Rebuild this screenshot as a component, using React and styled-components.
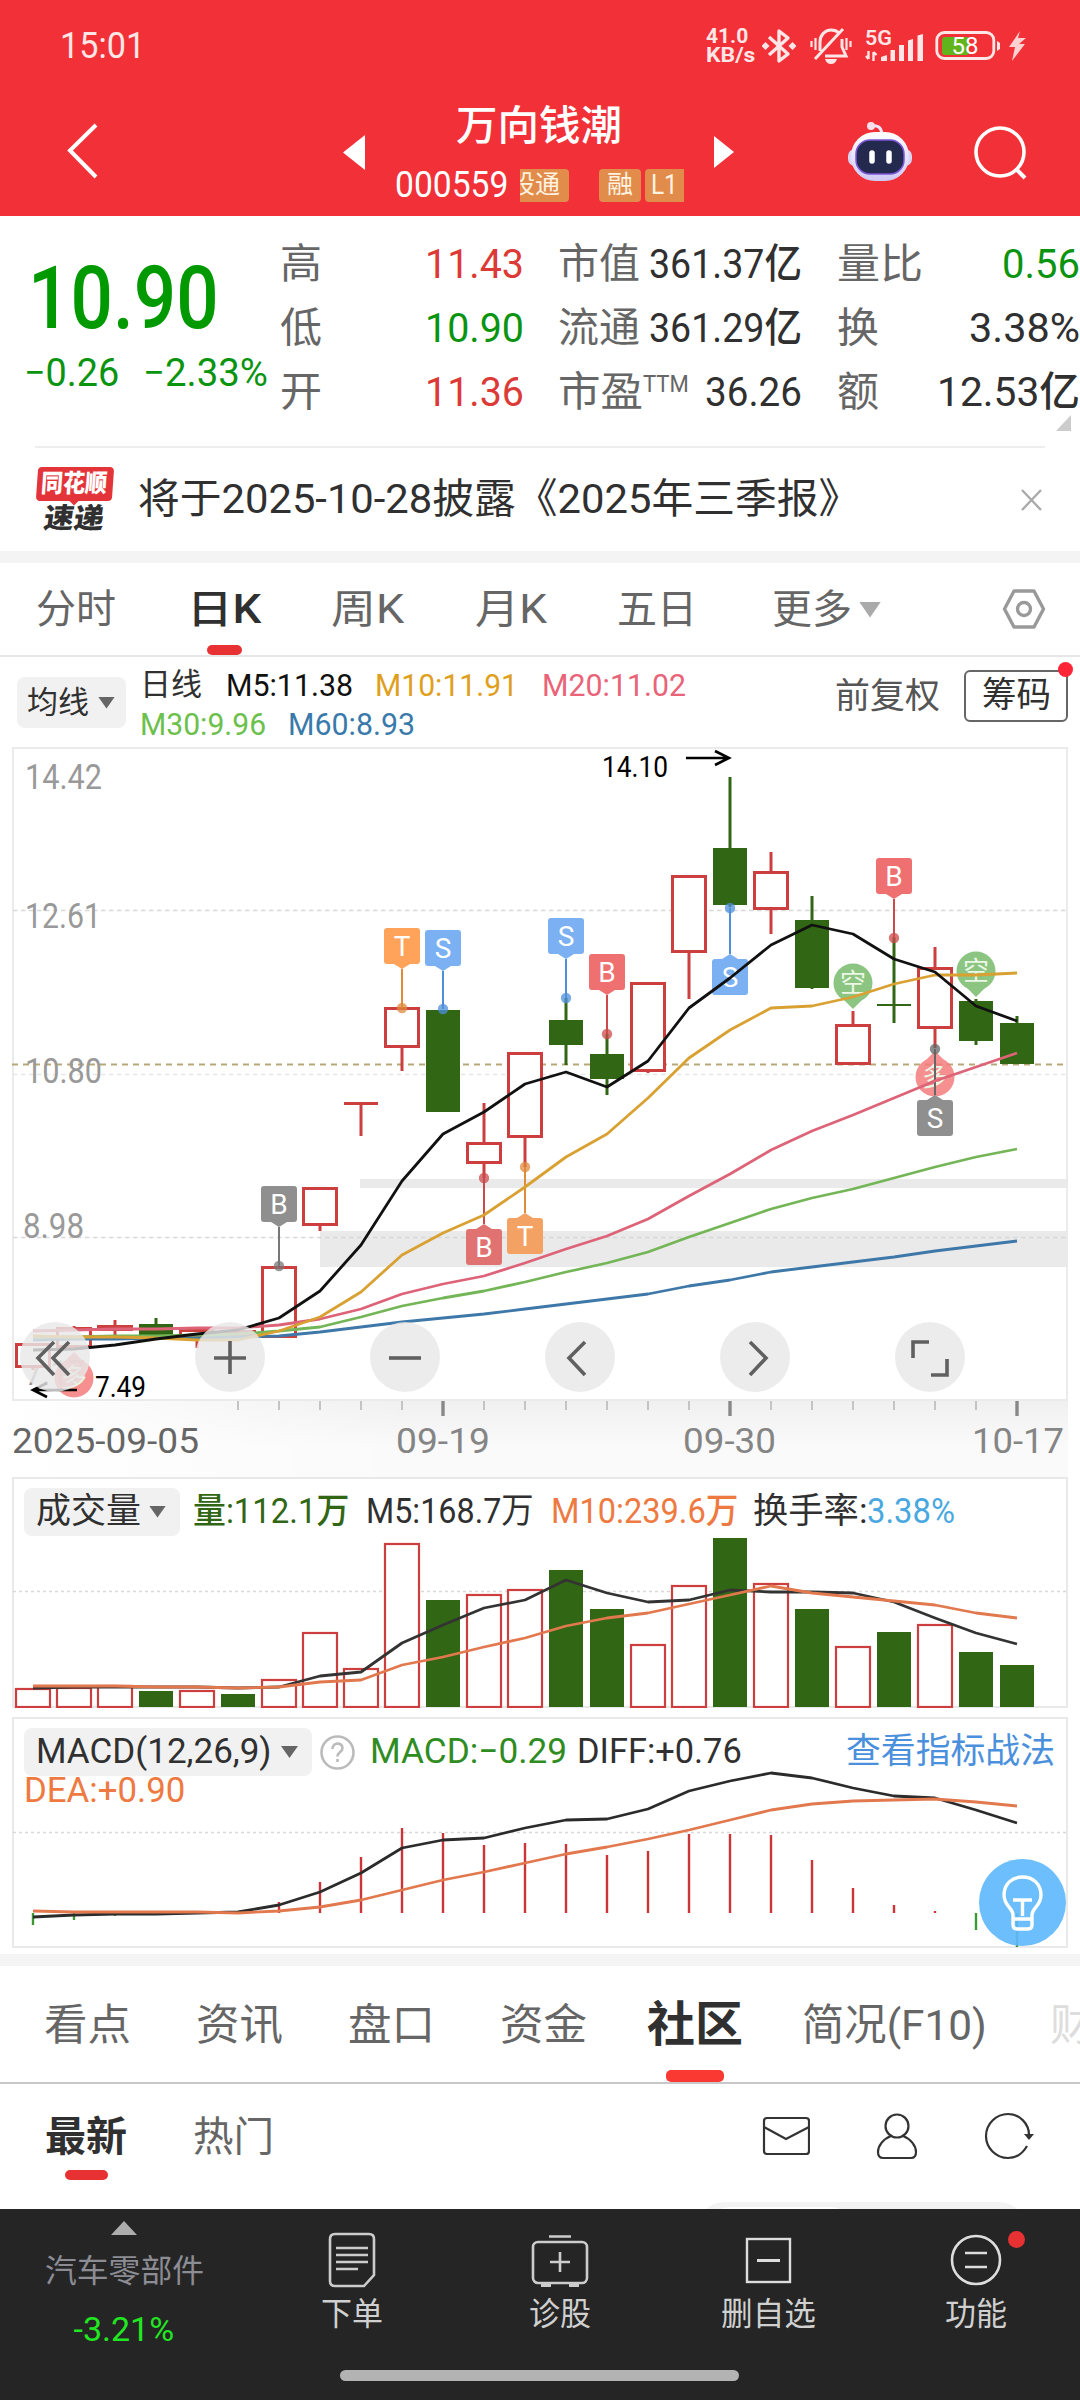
import React, { useLayoutEffect, useRef, useState } from 'react';
import styled, { createGlobalStyle } from 'styled-components';

const GlobalStyle = createGlobalStyle`
  * {
    box-sizing: border-box;
  }
  body {
    margin: 0;
    background: #fff;
    font-family: Roboto, 'Noto Sans CJK SC', sans-serif;
  }
  svg {
    display: block;
  }
`

const red = '#dc3a36'
const green = '#0a9410'
const candleRed = '#cc3f3e'
const candleGreen = '#316714'

/* Text squeezed or stretched to a given width, the digits are condensed */

const FitBox = styled.span`
  display: block;
  flex: none;
  width: ${p => p.$w}px;
  margin-left: ${p => p.$ml || 0}px;
  font-size: ${p => p.$size}px;
  line-height: ${p => p.$lh || Math.round(p.$size * 1.2)}px;
  font-weight: ${p => p.$weight || 400};
  color: ${p => p.$color || 'inherit'};
  white-space: nowrap;
  overflow: visible;
`

const FitInner = styled.span`
  display: inline-block;
  transform-origin: 0 50%;
  vertical-align: top;
`

const Fit = ({ w, size, lh, ml, color, weight, children }) => {
  const ref = useRef(null)
  const [scale, setScale] = useState(1)
  useLayoutEffect(() => {
    setScale(w / ref.current.offsetWidth)
  }, [w, children])
  return (
    <FitBox $w={w} $size={size} $lh={lh} $ml={ml} $color={color} $weight={weight}>
      <FitInner ref={ref} style={{ transform: `scaleX(${scale})` }}>{children}</FitInner>
    </FitBox>
  )
}

const Space = styled.i`
  flex: none;
  width: ${p => p.$w || 1}px;
  height: ${p => p.$h || 1}px;
`

const Page = styled.div`
  width: 1080px;
  height: 2400px;
  overflow: hidden;
  display: flex;
  flex-direction: column;
  background: #fff;
`

const Band = styled.div`
  flex: none;
  height: 12px;
  background: #f4f4f4;
`

/* ---------- header ---------- */

const Header = styled.header`
  flex: none;
  height: 216px;
  background: #f23038;
  color: #fff;
`

const StatusBar = styled.div`
  height: 92px;
  padding: 0 53px 0 60px;
  display: flex;
  align-items: center;
  justify-content: space-between;
  color: #ffe6e6;
`

const StatusIcons = styled.div`
  display: flex;
  align-items: center;
`

const Speed = styled.div`
  width: 49px;
  margin-right: 7px;
`

const Nav = styled.div`
  height: 124px;
  display: flex;
`

const Back = styled.div`
  width: 343px;
  padding: 30px 0 0 66px;
`

const Arrow = styled.div`
  margin-top: 43px;
  width: 22px;
`

const Title = styled.div`
  width: 349px;
  padding: 12px 0 0 30px;
`

const TitleName = styled.div`
  display: flex;
  padding-left: 61px;
`

const CodeRow = styled.div`
  display: flex;
  margin-top: 16px;
  align-items: center;
  height: 40px;
`

const Tag = styled.span`
  display: flex;
  align-items: center;
  justify-content: ${p => p.$end ? 'flex-end' : 'center'};
  width: ${p => p.$w}px;
  height: 33px;
  margin-left: ${p => p.$ml}px;
  padding-right: ${p => p.$end ? 9 : 0}px;
  border-radius: ${p => p.$radius};
  background: #e28c4c;
  color: #fff3e0;
  overflow: hidden;
`

const Robot = styled.div`
  margin: 29px 0 0 111px;
`

const Search = styled.div`
  margin: 32px 0 0 59px;
`

/* ---------- quote ---------- */

const Quote = styled.section`
  flex: none;
  height: 230px;
  display: flex;
  padding-top: 16px;
`

const PriceCol = styled.div`
  width: 280px;
  padding-top: 12px;
`

const Changes = styled.div`
  display: flex;
  padding-left: 24px;
  margin-top: 1px;
`

const StatCol = styled.div`
  width: ${p => p.$w}px;
  margin-left: ${p => p.$ml || 0}px;
`

const StatRow = styled.div`
  height: 64px;
  display: flex;
  align-items: center;
  justify-content: space-between;
  color: #303030;
`

const StatLabel = styled.div`
  display: flex;
  color: #666;
`

const Corner = styled.div`
  width: 15px;
  height: 16px;
  margin: -9px 0 0 219px;
  background: #ccc;
  clip-path: polygon(100% 0, 100% 100%, 0 100%);
`

const News = styled.section`
  flex: none;
  height: 105px;
  margin: 0 35px;
  border-top: 2px solid #eee;
  display: flex;
  align-items: center;
  color: #303030;
`

const Logo = styled.div`
  width: 78px;
  height: 68px;
  margin-top: 2px;
`

const LogoBubble = styled.div`
  width: 76px;
  height: 34px;
  margin-left: 2px;
  padding: 0 0 0 4px;
  border-radius: 4px;
  background: #e3343a;
  color: #fff;
  transform: skewX(-4deg);
`

const LogoPointer = styled.div`
  width: 10px;
  height: 5px;
  margin-left: 34px;
  background: #e3343a;
  clip-path: polygon(0 0, 100% 0, 50% 100%);
`

const LogoWord = styled.div`
  padding-left: 9px;
  margin-top: -3px;
  transform: skewX(-8deg);
`

const CloseBox = styled.div`
  margin-left: 160px;
`

/* ---------- chart tabs ---------- */

const Periods = styled.nav`
  flex: none;
  height: 94px;
  display: flex;
  border-bottom: 2px solid #e6e6e6;
  color: #666;
`

const Period = styled.div`
  margin-left: ${p => p.$ml}px;
  padding-top: 23px;
  display: flex;
  flex-direction: column;
  align-items: center;
  justify-content: space-between;
`

const Underline = styled.i`
  display: block;
  width: ${p => p.$w}px;
  height: ${p => p.$h || 10}px;
  border-radius: 5px;
  background: ${p => p.$color || '#e83132'};
`

const Caret = styled.i`
  display: block;
  width: ${p => p.$w || 17}px;
  height: ${p => p.$h || 12}px;
  margin-left: ${p => p.$ml || 0}px;
  background: ${p => p.$color || '#666'};
  clip-path: polygon(0 0, 100% 0, 50% 100%);
`

const PeriodMore = styled.div`
  display: flex;
  align-items: center;
  height: 93px;
  margin-left: 75px;
`

const Gear = styled.div`
  margin: 25px 0 0 121px;
`

const MaRow = styled.div`
  flex: none;
  height: 90px;
  display: flex;
`

const Picker = styled.div`
  display: flex;
  align-items: center;
  flex: none;
  width: ${p => p.$w}px;
  height: ${p => p.$h || 48}px;
  padding-left: ${p => p.$pad || 12}px;
  border-radius: 8px;
  background: #f1f1f1;
  color: #303030;
`

const MaPicker = styled.div`
  padding: 20px 0 0 17px;
`

const MaValues = styled.div`
  width: 709px;
  padding: 8px 0 0 14px;
`

const Line = styled.div`
  display: flex;
  height: ${p => p.$h || 39}px;
  align-items: center;
`

const Adjust = styled.div`
  padding-top: 19px;
`

const Chips = styled.div`
  position: relative;
  width: 104px;
  height: 52px;
  margin: 13px 0 0 24px;
  border: 2px solid #666;
  border-radius: 6px;
  padding: 3px 0 0 16px;
  color: #303030;
`

const RedDot = styled.i`
  position: absolute;
  top: ${p => p.$top}px;
  right: ${p => p.$right}px;
  width: ${p => p.$size}px;
  height: ${p => p.$size}px;
  border-radius: 50%;
  background: ${p => p.$color || '#ff2436'};
`

/* ---------- charts ---------- */

const KBox = styled.div`
  flex: none;
  position: relative;
  width: 1056px;
  height: 654px;
  margin-left: 12px;
`

const Controls = styled.div`
  position: absolute;
  left: 8px;
  bottom: 9px;
  display: flex;
  gap: 105px;
`

const RoundButton = styled.div`
  width: 70px;
  height: 70px;
  border-radius: 50%;
  background: rgba(232, 232, 232, 0.82);
`

const DateAxis = styled.div`
  flex: none;
  width: 1056px;
  height: 76px;
  margin-left: 12px;
  background: linear-gradient(90deg, #fff 0, rgba(255, 255, 255, 0) 400px),
    linear-gradient(180deg, #f0f0f0, #fafafa 60%);
`

const VolumeBox = styled.div`
  flex: none;
  position: relative;
  width: 1056px;
  height: 231px;
  margin-left: 12px;
`

const MacdBox = styled.div`
  flex: none;
  position: relative;
  width: 1056px;
  height: 231px;
  margin: 9px 0 6px 12px;
`

const Legend = styled.div`
  position: absolute;
  top: 11px;
  left: 12px;
  right: 0;
`

const Bulb = styled.div`
  position: absolute;
  top: 142px;
  left: 967px;
  width: 87px;
  height: 87px;
  border-radius: 50%;
  background: rgba(95, 185, 252, 0.92);
`

/* ---------- community ---------- */

const Sections = styled.nav`
  flex: none;
  height: 118px;
  display: flex;
  border-bottom: 2px solid #c8c8c8;
  color: #666;
  overflow: hidden;
`

const SectionTab = styled.div`
  flex: none;
  margin-left: ${p => p.$ml}px;
  padding-top: ${p => p.$active ? 30 : 33}px;
  display: flex;
  flex-direction: column;
  align-items: center;
  justify-content: space-between;
  color: ${p => p.$faded ? '#ddd' : 'inherit'};
`

const SubRow = styled.div`
  flex: none;
  height: 97px;
  padding-left: 45px;
  display: flex;
  color: #666;
`

const SubTab = styled.div`
  margin-left: ${p => p.$ml || 0}px;
  padding-top: 26px;
  display: flex;
  flex-direction: column;
  align-items: center;
`

const SubIcons = styled.div`
  display: flex;
  padding: 28px 0 0 488px;
  gap: 66px;
`

const Switch = styled.div`
  flex: none;
  width: 333px;
  height: 60px;
  margin: 21px 0 -53px 695px;
  padding: 5px 10px;
  border-radius: 30px;
  background: #f3f3f3;
`

const SwitchThumb = styled.div`
  width: 150px;
  height: 50px;
  border-radius: 25px;
  background: #fff;
`

const BottomBar = styled.footer`
  flex: none;
  position: relative;
  height: 191px;
  background: #252525;
  color: #d0d0d0;
  display: flex;
`

const Sector = styled.div`
  width: 248px;
  display: flex;
  flex-direction: column;
  align-items: center;
`

const SectorArrow = styled.i`
  width: 26px;
  height: 14px;
  margin-top: 12px;
  background: #adadad;
  clip-path: polygon(50% 0, 100% 100%, 0 100%);
`

const Action = styled.div`
  position: relative;
  width: 208px;
  display: flex;
  flex-direction: column;
  align-items: center;
  padding-top: 23px;
  gap: 7px;
`

const HomeIndicator = styled.div`
  position: absolute;
  left: 340px;
  bottom: 19px;
  width: 399px;
  height: 11px;
  border-radius: 6px;
  background: #b3b3b3;
`

/* ---------- data ---------- */

const colX = i => 33 + i * 41

// [up, bodyTop, bodyBottom, high, low]
const candles = [
  [1, 1343, 1368, 1343, 1370], [1, 1327, 1348, 1326, 1348], [1, 1325, 1331, 1320, 1337],
  [0, 1324, 1335, 1318, 1336], [1, 1329, 1338, 1329, 1348], [1, 1330, 1337, 1327, 1337],
  [1, 1266, 1338, 1266, 1338], [1, 1187, 1226, 1187, 1231], [1, 1102, 1105, 1102, 1136],
  [1, 1007, 1048, 1007, 1071], [0, 1010, 1112, 1010, 1112], [1, 1142, 1164, 1103, 1178],
  [1, 1052, 1138, 1052, 1167], [0, 1020, 1045, 998, 1065], [0, 1054, 1079, 1034, 1095],
  [1, 982, 1072, 982, 1073], [1, 875, 953, 875, 999], [0, 848, 905, 777, 907],
  [1, 871, 910, 852, 934], [0, 920, 988, 896, 989], [1, 1024, 1065, 1011, 1065],
  [0, 1004, 1006, 937, 1023], [1, 967, 1029, 947, 1048], [0, 1001, 1041, 999, 1045],
  [0, 1023, 1064, 1016, 1064],
]

const ma = [
  ['#3e78a8', [1340, 1339, 1339, 1338, 1338, 1337, 1336, 1332, 1327, 1322, 1318, 1314, 1309, 1304, 1299, 1294, 1286, 1280, 1272, 1267, 1262, 1257, 1251, 1246, 1241]],
  ['#74b657', [1337, 1337, 1336, 1336, 1335, 1334, 1331, 1327, 1317, 1306, 1298, 1291, 1282, 1272, 1263, 1252, 1237, 1223, 1209, 1198, 1189, 1178, 1167, 1157, 1149]],
  ['#dd6478', [1331, 1330, 1329, 1329, 1328, 1328, 1325, 1319, 1309, 1294, 1284, 1276, 1263, 1249, 1236, 1219, 1196, 1174, 1150, 1131, 1115, 1098, 1081, 1067, 1053]],
  ['#d9a032', [1336, 1337, 1337, 1338, 1340, 1340, 1331, 1317, 1292, 1255, 1233, 1215, 1187, 1157, 1134, 1098, 1058, 1030, 1008, 1006, 997, 984, 975, 975, 973]],
  ['#111', [1350, 1349, 1345, 1339, 1334, 1330, 1318, 1291, 1245, 1181, 1134, 1112, 1084, 1072, 1087, 1061, 1008, 978, 945, 925, 934, 959, 972, 1006, 1021]],
]

// [column, badge top, dot y, letter, fill, line]
const badges = [
  [6, 1186, 1266, 'B', '#8f8f8f', '#777'],
  [9, 928, 1008, 'T', '#ffa35a', '#e08a3c'],
  [10, 930, 1009, 'S', '#7bb0f2', '#4e8fdc'],
  [11, 1229, 1178, 'B', '#e07272', '#c94c4c'],
  [12, 1218, 1167, 'T', '#f4a263', '#e08a3c'],
  [13, 918, 998, 'S', '#7bb0f2', '#4e8fdc'],
  [14, 954, 1034, 'B', '#ee7070', '#cc4a4a'],
  [17, 959, 908, 'S', '#7bb0f2', '#4e8fdc'],
  [21, 858, 938, 'B', '#ee7070', '#cc4a4a'],
  [22, 1100, 1049, 'S', '#8f8f8f', '#666'],
]

// [up, top]
const volumes = [
  [1, 1688], [1, 1687], [1, 1685], [0, 1691], [1, 1690], [0, 1694], [1, 1679], [1, 1632], [1, 1668],
  [1, 1543], [0, 1600], [1, 1594], [1, 1589], [0, 1570], [0, 1609], [1, 1644], [1, 1585], [0, 1538],
  [1, 1583], [0, 1609], [1, 1646], [0, 1632], [1, 1624], [0, 1652], [0, 1665],
]
const volMa5 = [1688, 1687, 1687, 1687, 1687, 1688, 1687, 1676, 1672, 1643, 1625, 1608, 1600, 1580, 1593, 1602, 1600, 1590, 1592, 1592, 1593, 1602, 1618, 1633, 1644]
const volMa10 = [1686, 1686, 1686, 1687, 1687, 1688, 1687, 1682, 1680, 1665, 1657, 1647, 1638, 1626, 1618, 1613, 1604, 1595, 1586, 1593, 1597, 1601, 1605, 1613, 1618]

const macd = [1925, 1920, 1916, 1915, 1913, 1912, 1902, 1882, 1857, 1828, 1833, 1845, 1843, 1844, 1855, 1851, 1834, 1834, 1835, 1860, 1888, 1905, 1911, 1930, 1947]
const diff = [1917, 1915, 1914, 1914, 1913, 1912, 1905, 1892, 1873, 1848, 1840, 1838, 1828, 1820, 1819, 1809, 1791, 1781, 1773, 1778, 1788, 1796, 1798, 1810, 1823]
const dea = [1911, 1912, 1912, 1912, 1912, 1913, 1911, 1907, 1900, 1890, 1880, 1872, 1863, 1854, 1847, 1839, 1830, 1820, 1810, 1804, 1801, 1800, 1799, 1802, 1806]

const points = ys => ys.map((y, i) => `${colX(i)},${y}`).join(' ')

const Trend = ({ ys, color }) => (
  <polyline points={points(ys)} fill="none" stroke={color} strokeWidth="2.8" strokeLinejoin="round" />
)

const Candle = ({ i, data: [up, top, bottom, high, low] }) => {
  const x = colX(i)
  const color = up ? candleRed : candleGreen
  return (
    <g>
      {high < top && <path d={`M${x} ${high}V${top}`} stroke={color} strokeWidth="3" />}
      {low > bottom && <path d={`M${x} ${bottom}V${low}`} stroke={color} strokeWidth="3" />}
      {up && bottom - top > 4
        ? <rect x={x - 16.5} y={top + 1.5} width="33" height={bottom - top - 3} fill="#fff" stroke={color} strokeWidth="3" />
        : <rect x={x - 17} y={top} width="34" height={bottom - top} fill={color} />}
    </g>
  )
}

const Badge = ({ data: [i, top, dot, letter, fill, line] }) => {
  const x = colX(i)
  const below = dot < top
  const tip = below ? top - 5 : top + 41
  const base = below ? top : top + 36
  return (
    <g>
      <circle cx={x} cy={dot} r="5.2" fill={line} opacity="0.75" />
      <path d={`M${x} ${dot}V${tip}`} stroke={line} strokeWidth="2" />
      <path d={`M${x - 8} ${base}L${x} ${tip}L${x + 8} ${base}Z`} fill={fill} />
      <rect x={x - 18} y={top} width="36" height="36" rx="3" fill={fill} />
      <text x={x} y={top + 28} fontSize="28" textAnchor="middle" fill="#fff">{letter}</text>
    </g>
  )
}

const Balloon = ({ i, y, up, fill, children }) => {
  const x = colX(i)
  const s = up ? -1 : 1
  return (
    <g opacity="0.85">
      <circle cx={x} cy={y} r="19.5" fill={fill} />
      <path d={`M${x - 11} ${y + s * 15}L${x} ${y + s * 26}L${x + 11} ${y + s * 15}Z`} fill={fill} />
      <text x={x} y={y + 9} fontSize="26" textAnchor="middle" fill="#e8f5e0">{children}</text>
    </g>
  )
}

const AxisText = ({ x, y, w, size = 35, color = '#999', weight = 450, children }) => (
  <text x={x} y={y} fontSize={size} fontWeight={weight} fill={color} textLength={w} lengthAdjust="spacingAndGlyphs">{children}</text>
)

const KChart = () => (
  <svg width="1056" height="654" viewBox="12 747 1056 654">
    <rect x="13" y="748" width="1054" height="652" fill="none" stroke="#ebebeb" strokeWidth="2" />
    <rect x="360" y="1179" width="708" height="9" fill="#eaeaea" />
    <rect x="320" y="1231" width="748" height="36" fill="#eaeaea" />
    <path d="M13 910.5H1067M13 1237.5H1067" stroke="#d8d8d8" strokeWidth="1.3" strokeDasharray="4.5 3.5" />
    <path d="M13 1074.5H1067" stroke="#e6e6e6" strokeWidth="1.6" strokeDasharray="4.5 3.5" />
    <path d="M12 1064.5H1067" stroke="#b8a878" strokeWidth="1.8" strokeDasharray="6 5" />
    <AxisText x={25} y={789} w={77}>14.42</AxisText>
    <AxisText x={25} y={928} w={76}>12.61</AxisText>
    <AxisText x={25} y={1083} w={77}>10.80</AxisText>
    <AxisText x={23} y={1238} w={61}>8.98</AxisText>
    <AxisText x={25} y={1385} w={60}>7.17</AxisText>
    {candles.map((c, i) => <Candle key={i} i={i} data={c} />)}
    <Balloon i={20} y={983} fill="#78bc6c">空</Balloon>
    <Balloon i={23} y={971} fill="#78bc6c">空</Balloon>
    <Balloon i={22} y={1077} up fill="#f57c7c">多</Balloon>
    <Balloon i={1} y={1378} up fill="#f57c7c">多</Balloon>
    {badges.map((b, i) => <Badge key={i} data={b} />)}
    {ma.map(([color, ys]) => <Trend key={color} ys={ys} color={color} />)}
    <AxisText x={602} y={777} w={66} size={30} color="#000" weight={400}>14.10</AxisText>
    <path d="M686 758H729M715 751L729 758L715 765" fill="none" stroke="#000" strokeWidth="2.6" />
    <AxisText x={95} y={1397} w={51} size={30} color="#000" weight={400}>7.49</AxisText>
    <path d="M77 1390H33M47 1383L33 1390L47 1397" fill="none" stroke="#000" strokeWidth="2.6" />
  </svg>
)

const controlPaths = [
  'M34 20L18 36L34 53M49 20L33 36L49 53',
  'M35 19V52M19 36H51',
  'M19 36H51',
  'M40 20L24 36L40 53',
  'M30 20L46 36L30 53',
  'M18 36V20H34M52 37V53H36',
]

const major = [10, 17, 24]

const DateTicks = () => (
  <svg width="1056" height="76" viewBox="12 1401 1056 76">
    {candles.map((_, i) => i > 4 && (
      major.includes(i)
        ? <path key={i} d={`M${colX(i)} 1401V1416`} stroke="#888" strokeWidth="3.4" />
        : <path key={i} d={`M${colX(i)} 1401V1410`} stroke="#c4c4c4" strokeWidth="2" />
    ))}
    <AxisText x={12} y={1453} w={187} color="#666">2025-09-05</AxisText>
    <AxisText x={396} y={1453} w={94} color="#858585">09-19</AxisText>
    <AxisText x={683} y={1453} w={93} color="#858585">09-30</AxisText>
    <AxisText x={972} y={1453} w={92} color="#858585">10-17</AxisText>
  </svg>
)

const VolumeChart = () => (
  <svg width="1056" height="231" viewBox="12 1477 1056 231">
    <rect x="13" y="1478" width="1054" height="229" fill="none" stroke="#e9e9e9" strokeWidth="2" />
    <path d="M13 1591.5H1067" stroke="#d8d8d8" strokeWidth="1.3" strokeDasharray="3 3" />
    {volumes.map(([up, top], i) => up
      ? <rect key={i} x={colX(i) - 17} y={top + 1} width="34" height={1706 - top} fill="#fff" stroke={candleRed} strokeWidth="2.2" />
      : <rect key={i} x={colX(i) - 17} y={top} width="34" height={1707 - top} fill={candleGreen} />)}
    <Trend ys={volMa5} color="#333" />
    <Trend ys={volMa10} color="#e2794e" />
  </svg>
)

const MacdChart = () => (
  <svg width="1056" height="231" viewBox="12 1717 1056 231">
    <rect x="13" y="1718" width="1054" height="229" fill="none" stroke="#e9e9e9" strokeWidth="2" />
    <path d="M13 1832.5H1067" stroke="#d8d8d8" strokeWidth="1.3" strokeDasharray="3 3" />
    {macd.map((y, i) => (
      <path key={i} d={`M${colX(i)} 1913V${y}`} stroke={y > 1913 ? '#3c9a34' : '#cc3538'} strokeWidth="2.4" />
    ))}
    <Trend ys={diff} color="#2b2b2b" />
    <Trend ys={dea} color="#e2794e" />
  </svg>
)

/* ---------- icons ---------- */

const BluetoothIcon = () => (
  <svg width="34" height="38" viewBox="0 0 34 38" fill="none" stroke="#ffe6e6" strokeWidth="3.4">
    <path d="M7 10L26 27L17 34V4L26 11L7 28" strokeLinejoin="round" />
    <path d="M3.5 15L7.5 19L3.5 23L-.5 19ZM30.5 15L34.5 19L30.5 23L26.5 19Z" fill="#ffe6e6" stroke="none" />
  </svg>
)

const MuteIcon = () => (
  <svg width="42" height="38" viewBox="0 0 42 38" fill="none" stroke="#ffe6e6" strokeWidth="3">
    <path d="M10 24V15C10 8 15 3 21 3C24 3 27 4 29 6M32 12V20L36 29H15M5 32L33 2" />
    <path d="M15 32H27C26 35.5 24 37 21 37S16 35.5 15 32Z" fill="#ffe6e6" stroke="none" />
    <path d="M1.5 14V20M5.5 11V23M40.5 14V20M36.5 11V23" strokeWidth="2.2" />
  </svg>
)

const SignalIcon = () => (
  <svg width="60" height="34" viewBox="0 0 60 34" fill="#ffe6e6">
    <text x="0" y="16" fontSize="20" fontWeight="600" textLength="27" lengthAdjust="spacingAndGlyphs">5G</text>
    <path d="M3.5 22V30M1 27L3.5 30M8.5 32V23M11.5 26L8.5 23" stroke="#ffe6e6" strokeWidth="2.4" fill="none" />
    <path d="M16 32V28L22 26V32ZM25.5 21H30V32H25.5ZM34 16H39V32H34ZM43 11.5L48 10V32H43ZM52.5 6.5L58 5V32H52.5Z" />
  </svg>
)

const BatteryIcon = () => (
  <svg width="67" height="30" viewBox="0 0 67 30">
    <rect x="7" y="6" width="27" height="18" rx="3" fill="#62b41c" />
    <rect x="1.8" y="1.5" width="57" height="26" rx="7.5" fill="none" stroke="#ffe6e6" strokeWidth="2.8" />
    <path d="M62 10V20L65 18V12Z" fill="#ffe6e6" />
    <text x="16.500" y="23" fontSize="23" fill="#fff" textLength="27" lengthAdjust="spacingAndGlyphs">58</text>
  </svg>
)

const BoltIcon = () => (
  <svg width="19" height="30" viewBox="0 0 19 30">
    <path d="M12 0L1 16H7L4 30L17 13H11L18 7H10Z" fill="#ffd0d2" />
  </svg>
)

const RobotIcon = () => (
  <svg width="66" height="62" viewBox="0 0 66 62">
    <defs>
      <linearGradient id="shell" x1="0" y1="0" x2="0" y2="1">
        <stop offset="0" stopColor="#fff" />
        <stop offset="1" stopColor="#cfc9f4" />
      </linearGradient>
    </defs>
    <path d="M24 5C31 4 34 6 35 13" stroke="#eee6fa" strokeWidth="3" fill="none" />
    <circle cx="24" cy="5" r="4" fill="#fbdfea" />
    <rect x="1" y="28" width="64" height="17" rx="7" fill="#d9d4f5" />
    <rect x="4" y="11" width="58" height="49" rx="24" fill="url(#shell)" />
    <rect x="9" y="19" width="48" height="34" rx="14" fill="#232a4e" stroke="#7b55d8" strokeWidth="1.5" />
    <path d="M25 32V40M42 32V40" stroke="#fff" strokeWidth="5.5" strokeLinecap="round" />
  </svg>
)

const DocIcon = () => (
  <svg width="48" height="56" viewBox="0 0 48 56" fill="none" stroke="#ccc" strokeWidth="2.6">
    <path d="M7 2H41Q46 2 46 7V43L36 54H7Q2 54 2 49V7Q2 2 7 2Z" />
    <path d="M8 16H40M8 23H40M8 30H40M8 37H30" />
  </svg>
)

const CaseIcon = () => (
  <svg width="58" height="56" viewBox="0 0 58 56" fill="none" stroke="#ccc" strokeWidth="2.6">
    <rect x="2" y="10" width="54" height="41" rx="5" />
    <path d="M18 4.5H40M29 20V40M19 30H39" />
    <path d="M10 53H20M38 53H48" strokeWidth="4" />
  </svg>
)

const RemoveIcon = () => (
  <svg width="48" height="56" viewBox="0 0 48 56" fill="none" stroke="#ddd" strokeWidth="2.4">
    <rect x="3" y="7" width="43" height="43" />
    <path d="M13 28.5H36" strokeWidth="3" />
  </svg>
)

const MenuIcon = () => (
  <svg width="52" height="56" viewBox="0 0 52 56" fill="none" stroke="#ddd" strokeWidth="2.6">
    <circle cx="26" cy="28" r="24" />
    <path d="M15 21H37M15 35H37" />
  </svg>
)

const actions = [
  ['下单', 62, DocIcon],
  ['诊股', 62, CaseIcon],
  ['删自选', 95, RemoveIcon],
  ['功能', 62, MenuIcon],
]

const App = () => {
  return (<Page>
    <GlobalStyle />
    <Header>
      <StatusBar>
        <Fit w={85} size={37} weight={450}>15:01</Fit>
        <StatusIcons>
          <Speed>
            <Fit w={42} size={21} lh={19} weight={700}>41.0</Fit>
            <Fit w={49} size={21} lh={19} weight={700}>KB/s</Fit>
          </Speed>
          <BluetoothIcon />
          <Space $w={14} />
          <MuteIcon />
          <Space $w={13} />
          <SignalIcon />
          <Space $w={10} />
          <BatteryIcon />
          <Space $w={6} />
          <BoltIcon />
        </StatusIcons>
      </StatusBar>
      <Nav>
        <Back>
          <svg width="34" height="58" viewBox="0 0 34 58">
            <path d="M30 3L4 28.5L30 55" fill="none" stroke="#fff" strokeWidth="4" />
          </svg>
        </Back>
        <Arrow>
          <svg width="22" height="35"><path d="M22 0V35L0 17.5Z" fill="#fff" /></svg>
        </Arrow>
        <Title>
          <TitleName><Fit w={166} size={41} lh={45} weight={450}>万向钱潮</Fit></TitleName>
          <CodeRow>
            <Fit w={113} size={36} weight={450}>000559</Fit>
            <Tag $w={49} $ml={12} $end $radius="0 4px 4px 0"><Fit w={50} size={25}>股通</Fit></Tag>
            <Tag $w={42} $ml={30} $radius="4px"><Fit w={26} size={25}>融</Fit></Tag>
            <Tag $w={39} $ml={4} $radius="4px 0 0 4px"><Fit w={27} size={27}>L1</Fit></Tag>
          </CodeRow>
        </Title>
        <Arrow>
          <svg width="22" height="34"><path d="M0 1V33L20 17Z" fill="#fff" /></svg>
        </Arrow>
        <Robot><RobotIcon /></Robot>
        <Search>
          <svg width="56" height="56" viewBox="0 0 56 56" fill="none" stroke="#fff" strokeWidth="3.6">
            <circle cx="28" cy="28" r="24" />
            <path d="M44 45L53 54" strokeWidth="4" />
          </svg>
        </Search>
      </Nav>
    </Header>

    <Quote>
      <PriceCol>
        <Fit w={191} ml={28} size={88} lh={107} weight={500} color="#009900">10.90</Fit>
        <Changes>
          <Fit w={95} size={39} lh={42} weight={450} color={green}>−0.26</Fit>
          <Fit w={125} ml={24} size={39} lh={42} weight={450} color={green}>−2.33%</Fit>
        </Changes>
      </PriceCol>
      <StatCol $w={244}>
        <StatRow><StatLabel><Fit w={42} size={41}>高</Fit></StatLabel><Fit w={99} size={41} weight={450} color={red}>11.43</Fit></StatRow>
        <StatRow><StatLabel><Fit w={42} size={41}>低</Fit></StatLabel><Fit w={99} size={41} weight={450} color={green}>10.90</Fit></StatRow>
        <StatRow><StatLabel><Fit w={42} size={41}>开</Fit></StatLabel><Fit w={99} size={41} weight={450} color={red}>11.36</Fit></StatRow>
      </StatCol>
      <StatCol $w={244} $ml={34}>
        <StatRow><StatLabel><Fit w={82} size={41}>市值</Fit></StatLabel><Fit w={153} size={41} weight={450}>361.37亿</Fit></StatRow>
        <StatRow><StatLabel><Fit w={82} size={41}>流通</Fit></StatLabel><Fit w={153} size={41} weight={450}>361.29亿</Fit></StatRow>
        <StatRow>
          <StatLabel><Fit w={85} size={41}>市盈</Fit><Fit w={46} size={24} lh={32}>TTM</Fit></StatLabel>
          <Fit w={97} size={41} weight={450}>36.26</Fit>
        </StatRow>
      </StatCol>
      <StatCol $w={243} $ml={35}>
        <StatRow><StatLabel><Fit w={86} size={41}>量比</Fit></StatLabel><Fit w={78} size={41} weight={450} color={green}>0.56</Fit></StatRow>
        <StatRow><StatLabel><Fit w={42} size={41}>换</Fit></StatLabel><Fit w={111} size={41} weight={450}>3.38%</Fit></StatRow>
        <StatRow><StatLabel><Fit w={42} size={41}>额</Fit></StatLabel><Fit w={143} size={41} weight={450}>12.53亿</Fit></StatRow>
        <Corner />
      </StatCol>
    </Quote>

    <News>
      <Logo>
        <LogoBubble><Fit w={66} size={25} lh={34} weight={900}>同花顺</Fit></LogoBubble>
        <LogoPointer />
        <LogoWord><Fit w={60} size={28} lh={32} weight={900}>速递</Fit></LogoWord>
      </Logo>
      <Fit w={722} ml={25} size={41}>将于2025-10-28披露《2025年三季报》</Fit>
      <CloseBox>
        <svg width="24" height="24"><path d="M2 2L21 22M21 2L2 22" stroke="#aaa" strokeWidth="2.4" /></svg>
      </CloseBox>
    </News>
    <Band />

    <Periods>
      <Period $ml={36}><Fit w={80} size={40}>分时</Fit></Period>
      <Period $ml={71}><Fit w={74} size={40} weight={500} color="#303030">日K</Fit><Underline $w={35} /></Period>
      <Period $ml={70}><Fit w={73} size={40}>周K</Fit></Period>
      <Period $ml={71}><Fit w={72} size={40}>月K</Fit></Period>
      <Period $ml={70}><Fit w={80} size={40}>五日</Fit></Period>
      <PeriodMore>
        <Fit w={80} size={40}>更多</Fit>
        <Caret $w={22} $h={16} $ml={7} $color="#aaa" />
      </PeriodMore>
      <Gear>
        <svg width="44" height="42" viewBox="0 0 44 42" fill="none" stroke="#999" strokeWidth="3.4" strokeLinejoin="round">
          <path d="M12 3H32L41.5 21L32 39H12L2.500 21Z" />
          <circle cx="22" cy="21" r="6.5" />
        </svg>
      </Gear>
    </Periods>

    <MaRow>
      <MaPicker>
        <Picker $w={109} $h={51} $pad={10}><Fit w={62} size={31}>均线</Fit><Caret $ml={9} /></Picker>
      </MaPicker>
      <MaValues>
        <Line>
          <Fit w={62} size={31} color="#303030">日线</Fit>
          <Fit w={127} ml={24} size={32} weight={450} color="#111">M5:11.38</Fit>
          <Fit w={143} ml={22} size={32} weight={450} color="#dfa01e">M10:11.91</Fit>
          <Fit w={144} ml={24} size={32} weight={450} color="#ea6479">M20:11.02</Fit>
        </Line>
        <Line>
          <Fit w={126} size={32} weight={450} color="#6cc04c">M30:9.96</Fit>
          <Fit w={127} ml={22} size={32} weight={450} color="#3a7aab">M60:8.93</Fit>
        </Line>
      </MaValues>
      <Adjust><Fit w={105} size={35} color="#555">前复权</Fit></Adjust>
      <Chips>
        <Fit w={69} size={35}>筹码</Fit>
        <RedDot $top={-10} $right={-7} $size={15} />
      </Chips>
    </MaRow>

    <KBox>
      <KChart />
      <Controls>
        {controlPaths.map((d, i) => (
          <RoundButton key={i}>
            <svg width="70" height="70" fill="none" stroke="#606060" strokeWidth="3.6"><path d={d} /></svg>
          </RoundButton>
        ))}
      </Controls>
    </KBox>
    <DateAxis><DateTicks /></DateAxis>

    <VolumeBox>
      <VolumeChart />
      <Legend>
        <Line $h={47}>
          <Picker $w={156}><Fit w={105} size={35}>成交量</Fit><Caret $ml={8} /></Picker>
          <Fit w={156} ml={13} size={35} weight={450} color={candleGreen}>量:112.1万</Fit>
          <Fit w={168} ml={17} size={35} color="#303030">M5:168.7万</Fit>
          <Fit w={187} ml={17} size={35} weight={450} color="#ee7a42">M10:239.6万</Fit>
          <Fit w={114} ml={15} size={35} color="#303030">换手率:</Fit>
          <Fit w={88} size={35} weight={450} color="#4aa8e0">3.38%</Fit>
        </Line>
      </Legend>
    </VolumeBox>

    <MacdBox>
      <MacdChart />
      <Legend>
        <Line $h={48}>
          <Picker $w={288}><Fit w={236} size={35}>MACD(12,26,9)</Fit><Caret $ml={9} /></Picker>
          <Space $w={8} />
          <svg width="35" height="35" viewBox="0 0 35 35" fill="none" stroke="#bbb" strokeWidth="2.6">
            <circle cx="17.5" cy="17.5" r="16" />
            <path d="M12.5 14C12.5 7 22.5 7 22.5 13C22.5 17 17.5 17 17.5 21.5M17.5 24V27" />
          </svg>
          <Fit w={197} ml={15} size={35} color="#2f8c22" weight={450}>MACD:−0.29</Fit>
          <Fit w={165} ml={10} size={35} color="#303030">DIFF:+0.76</Fit>
          <Fit w={209} ml={104} size={35} color="#4b90dc">查看指标战法</Fit>
        </Line>
        <Line $h={30}><Fit w={161} size={35} weight={450} color="#ee7a42">DEA:+0.90</Fit></Line>
      </Legend>
      <Bulb>
        <svg width="87" height="87" fill="none" stroke="#fff" strokeWidth="3.4">
          <path d="M34 56C34 49 25 47 25 36C25 25 33 18 43.5 18S62 25 62 36C62 47 53 49 53 56V66Q53 70 49 70H38Q34 70 34 66ZM34 60H53M34 41H53M43.5 41V57" />
        </svg>
      </Bulb>
    </MacdBox>
    <Band />

    <Sections>
      <SectionTab $ml={44}><Fit w={87} size={43}>看点</Fit></SectionTab>
      <SectionTab $ml={65}><Fit w={87} size={43}>资讯</Fit></SectionTab>
      <SectionTab $ml={65}><Fit w={87} size={43}>盘口</Fit></SectionTab>
      <SectionTab $ml={65}><Fit w={87} size={43}>资金</Fit></SectionTab>
      <SectionTab $ml={60} $active>
        <Fit w={96} size={48} weight={700} color="#303030">社区</Fit>
        <Underline $w={58} $h={12} $color="#fa3a32" />
      </SectionTab>
      <SectionTab $ml={59}><Fit w={185} size={43}>简况(F10)</Fit></SectionTab>
      <SectionTab $ml={63} $faded><Fit w={43} size={43}>财</Fit></SectionTab>
    </Sections>

    <SubRow>
      <SubTab>
        <Fit w={82} size={41} lh={54} weight={700} color="#303030">最新</Fit>
        <Space $h={6} />
        <Underline $w={43} $h={10} />
      </SubTab>
      <SubTab $ml={66}><Fit w={81} size={41} lh={54}>热门</Fit></SubTab>
      <SubIcons>
        <svg width="48" height="48" viewBox="0 0 48 48" fill="none" stroke="#333" strokeWidth="2.2">
          <rect x="2" y="6" width="45" height="36" rx="3" />
          <path d="M2 15L24 27L47 15" />
        </svg>
        <svg width="42" height="48" viewBox="0 0 42 48" fill="none" stroke="#333" strokeWidth="2.2">
          <circle cx="21" cy="14" r="11.5" />
          <path d="M15 24C7 27 2 34 2 40Q2 46 7 46H35Q40 46 40 40C40 34 35 27 27 24" />
        </svg>
        <svg width="50" height="48" viewBox="0 0 50 48" fill="none" stroke="#333" strokeWidth="2.2">
          <path d="M43 34C39 41 32 46 24 46C12 46 2 36 2 24S12 2 24 2C36 2 45 12 45 23" />
          <path d="M40 22H50L45 28Z" fill="#333" stroke="none" />
        </svg>
      </SubIcons>
    </SubRow>
    <Switch><SwitchThumb /></Switch>

    <BottomBar>
      <Sector>
        <SectorArrow />
        <Space $h={17} />
        <Fit w={159} size={32} lh={38} color="#8c8c94">汽车零部件</Fit>
        <Space $h={19} />
        <Fit w={101} size={34} lh={41} color="#22e622">-3.21%</Fit>
      </Sector>
      {actions.map(([label, w, Icon]) => (
        <Action key={label}>
          <Icon />
          <Fit w={w} size={32} lh={38}>{label}</Fit>
          {label === '功能' && <RedDot $top={22} $right={55} $size={17} $color="#e83132" />}
        </Action>
      ))}
      <HomeIndicator />
    </BottomBar>
  </Page>);
}

export default App;
